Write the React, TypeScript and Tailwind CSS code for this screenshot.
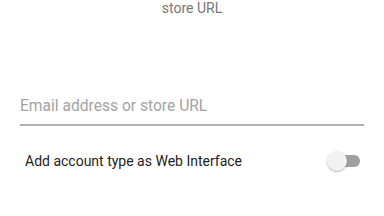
import { useState } from 'react'

export default function App() {
  const [webInterface, setWebInterface] = useState(false)

  return (
    <div className="w-[384px] h-[216px] bg-white overflow-hidden font-['Roboto',sans-serif]">
      {/* Hint text, scrolled partly off the top */}
      <div className="pt-[1px] text-center text-[14px] leading-[15px] text-[#777777]">
        store URL
      </div>

      {/* Email / store input */}
      <div className="mt-[77px] px-5">
        <input
          type="text"
          placeholder="Email address or store URL"
          className="w-full h-[33px] pb-[5px] bg-transparent text-[15.6px] text-[#212121] placeholder:text-[#a3a3a3] outline-none border-b-2 border-[#b3b3b3]"
        />
      </div>

      {/* Web Interface toggle */}
      <div className="mt-[23px] pl-[25px] pr-[24px] h-[24px] flex items-center justify-between">
        <span className="text-[14px] text-[#222222]">Add account type as Web Interface</span>
        <button
          type="button"
          onClick={() => setWebInterface(v => !v)}
          className="relative w-[33px] h-[20px] flex items-center"
        >
          <span className="absolute left-[12px] right-0 h-[12px] rounded-full bg-[#a0a0a0]" />
          <span
            className={
              webInterface
                ? 'absolute left-[13px] w-[20px] h-[20px] rounded-full bg-[#f2f2f2] shadow-[0_1px_2px_rgba(0,0,0,0.3)]'
                : 'absolute left-0 w-[20px] h-[20px] rounded-full bg-[#f2f2f2] shadow-[0_1px_2px_rgba(0,0,0,0.3)]'
            }
          />
        </button>
      </div>
    </div>
  )
}
